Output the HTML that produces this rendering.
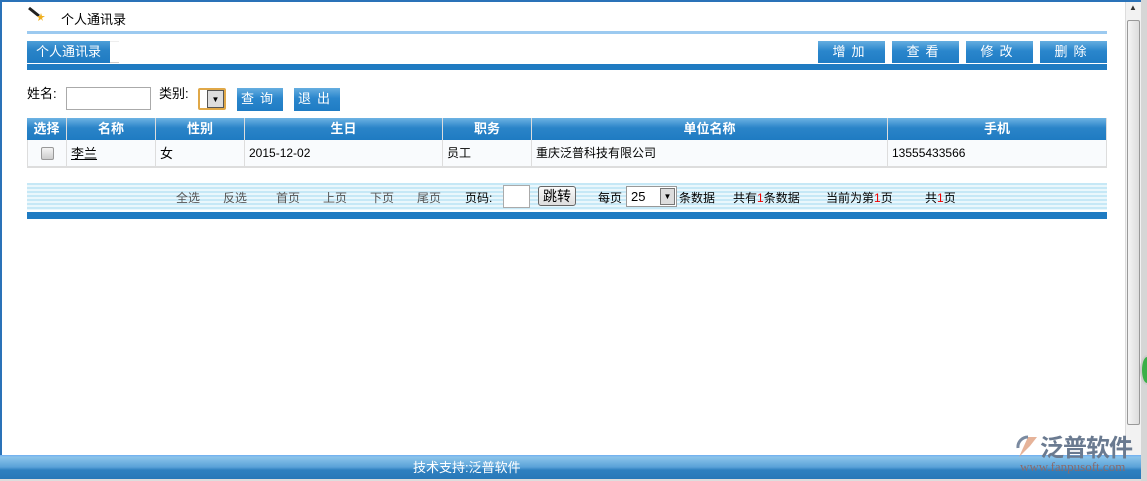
<!DOCTYPE html>
<html><head><meta charset="utf-8"><style>
*{margin:0;padding:0;box-sizing:border-box}
body{width:1147px;height:481px;overflow:hidden;background:#fff;position:relative;font-family:"Liberation Sans","Noto Sans CJK SC",sans-serif;font-size:12px;color:#000}
.a{position:absolute}
.btn{position:absolute;top:41px;height:22px;width:67px;background:linear-gradient(#66aee0,#2a86cc 45%,#1f7cc4);color:#fff;text-align:center;line-height:22px;letter-spacing:6px;font-size:13px}
.th{position:absolute;top:118px;height:22px;background:linear-gradient(#6db3e3,#2a84c8 45%,#1f7bc2);color:#fff;font-weight:bold;text-align:center;line-height:22px;font-size:13px;border-right:1px solid #ddd}
.td{position:absolute;top:140px;height:27px;line-height:27px;background:#f9fbfd;border-right:1px solid #ddd;border-bottom:1px solid #ddd;padding-left:4px;font-size:12px}
.pg span{position:absolute;top:189px;color:#555;font-size:12px}
</style></head><body>
<div class="a" style="left:0;top:0;width:1141px;height:2px;background:#2a72b8"></div>
<div class="a" style="left:0;top:0;width:2px;height:456px;background:#2a72b8"></div>
<svg class="a" style="left:27px;top:6px" width="20" height="16"><line x1="2" y1="2" x2="12" y2="10" stroke="#222" stroke-width="3"/><polygon points="14,7 15,10 18,10 15,12 16,15 14,13 11,15 12,12 10,10 13,10" fill="#f0b020"/></svg>
<div class="a" style="left:61px;top:9px;font-size:13px">个人通讯录</div>
<div class="a" style="left:27px;top:31px;width:1080px;height:3px;background:#9ccaf0"></div>
<div class="a" style="left:27px;top:41px;width:83px;height:22px;background:linear-gradient(#4e9fd8,#2a84c8 40%,#1f7bc2);color:#fff;font-size:13px;line-height:22px;padding-left:9px">个人通讯录</div>
<div class="a" style="left:110px;top:41px;width:9px;height:22px;border-top:1px solid #eee;border-bottom:1px solid #ccc"></div>
<div class="btn" style="left:818px">增加</div>
<div class="btn" style="left:892px">查看</div>
<div class="btn" style="left:966px">修改</div>
<div class="btn" style="left:1040px">删除</div>
<div class="a" style="left:27px;top:64px;width:1080px;height:6px;background:#1f7bc2"></div>
<div class="a" style="left:27px;top:83px;font-size:13px">姓名:</div>
<div class="a" style="left:66px;top:87px;width:85px;height:23px;border:1px solid #aaa"></div>
<div class="a" style="left:159px;top:83px;font-size:13px">类别:</div>
<div class="a" style="left:198px;top:88px;width:28px;height:22px;border:2px solid #e0a848;border-radius:2px;background:#fff"></div>
<div class="a" style="left:207px;top:90px;width:17px;height:18px;border:1px solid #555;background:#ddd;font-size:8px;text-align:center;line-height:17px">▼</div>
<div class="btn" style="left:237px;top:88px;width:46px;height:23px;font-size:13px">查询</div>
<div class="btn" style="left:294px;top:88px;width:46px;height:23px;font-size:13px">退出</div>
<div class="a" style="left:27px;top:118px;width:1080px;height:50px;border:1px solid #ddd;border-top:none"></div>
<div class="th" style="left:27px;width:40px">选择</div>
<div class="th" style="left:67px;width:89px">名称</div>
<div class="th" style="left:156px;width:89px">性别</div>
<div class="th" style="left:245px;width:198px">生日</div>
<div class="th" style="left:443px;width:89px">职务</div>
<div class="th" style="left:532px;width:356px">单位名称</div>
<div class="th" style="left:888px;width:219px">手机</div>
<div class="td" style="left:27px;width:40px;border-left:1px solid #ddd"><div style="margin:7px 0 0 9px;width:13px;height:13px;border:1px solid #999;border-radius:2px;background:linear-gradient(#f4f4f4,#ccc)"></div></div>
<div class="td" style="left:67px;width:89px;font-size:13px"><u>李兰</u></div>
<div class="td" style="left:156px;width:89px;font-size:13px">女</div>
<div class="td" style="left:245px;width:198px">2015-12-02</div>
<div class="td" style="left:443px;width:89px">员工</div>
<div class="td" style="left:532px;width:356px">重庆泛普科技有限公司</div>
<div class="td" style="left:888px;width:219px">13555433566</div>
<div class="a" style="left:27px;top:183px;width:1080px;height:27px;background:repeating-linear-gradient(#c6e8f6 0,#c6e8f6 2px,#eaf7fc 2px,#eaf7fc 4px)"></div>
<div class="pg">
<span style="left:176px">全选</span><span style="left:223px">反选</span><span style="left:276px">首页</span><span style="left:323px">上页</span><span style="left:370px">下页</span><span style="left:417px">尾页</span>
<span style="left:465px;color:#000">页码:</span>
<span style="left:598px;color:#000">每页</span>
<span style="left:679px;color:#000">条数据</span>
<span style="left:733px;color:#000">共有<b style="color:#e00;font-weight:normal">1</b>条数据</span>
<span style="left:826px;color:#000">当前为第<b style="color:#e00;font-weight:normal">1</b>页</span>
<span style="left:925px;color:#000">共<b style="color:#e00;font-weight:normal">1</b>页</span>
</div>
<div class="a" style="left:503px;top:185px;width:27px;height:23px;border:1px solid #aaa;background:#fff"></div>
<div class="a" style="left:538px;top:186px;width:38px;height:20px;border:1px solid #666;border-radius:3px;background:linear-gradient(#fafafa,#ddd);font-size:14px;text-align:center;line-height:18px">跳转</div>
<div class="a" style="left:626px;top:186px;width:51px;height:21px;border:1px solid #999;background:#fff;font-size:13px;padding-left:4px;line-height:19px">25</div>
<div class="a" style="left:660px;top:188px;width:15px;height:17px;border:1px solid #777;background:#ddd;font-size:8px;text-align:center;line-height:16px">▼</div>
<div class="a" style="left:27px;top:212px;width:1080px;height:7px;background:#1f7bc2"></div>
<div class="a" style="left:1125px;top:2px;width:16px;height:454px;background:#f2f2f2;border-left:1px solid #ddd"></div>
<div class="a" style="left:1127px;top:20px;width:13px;height:405px;border:1px solid #999;border-radius:2px;background:linear-gradient(90deg,#f4f4f4,#ddd)"></div>
<div class="a" style="left:1129px;top:3px;font-size:8px;color:#333">▲</div>
<div class="a" style="left:1141px;top:0;width:6px;height:481px;background:#d6d6d6"></div>
<div class="a" style="left:1140px;top:355px;width:14px;height:30px;border-radius:50%;background:#3ab048;border:2px solid #ccc"></div>
<div class="a" style="left:0;top:455px;width:1141px;height:24px;background:linear-gradient(#6eaef0 0,#8cc4ea 2px,#5aa2d8 12px,#2e80c0 15px,#2878b8);color:#fff;font-size:13px;line-height:25px;padding-left:413px">技术支持:泛普软件</div>
<div class="a" style="left:0;top:479px;width:1141px;height:2px;background:#ddd"></div>
<svg class="a" style="left:1015px;top:433px" width="24" height="28"><path d="M4 24 L13 4 L22 4 L15 13 Z" fill="#e0a080" opacity="0.8"/><path d="M3 15 A10 10 0 0 1 13 4" stroke="#7a8aa0" stroke-width="3" fill="none"/></svg>
<div class="a" style="left:1040px;top:428px;font-size:24px;color:#6a7a90;font-weight:bold;letter-spacing:-1px">泛普软件</div>
<div class="a" style="left:1020px;top:459px;font-size:13px;color:#8a6a6a;font-family:'Liberation Serif',serif">www.fanpusoft.com</div>
</body></html>
